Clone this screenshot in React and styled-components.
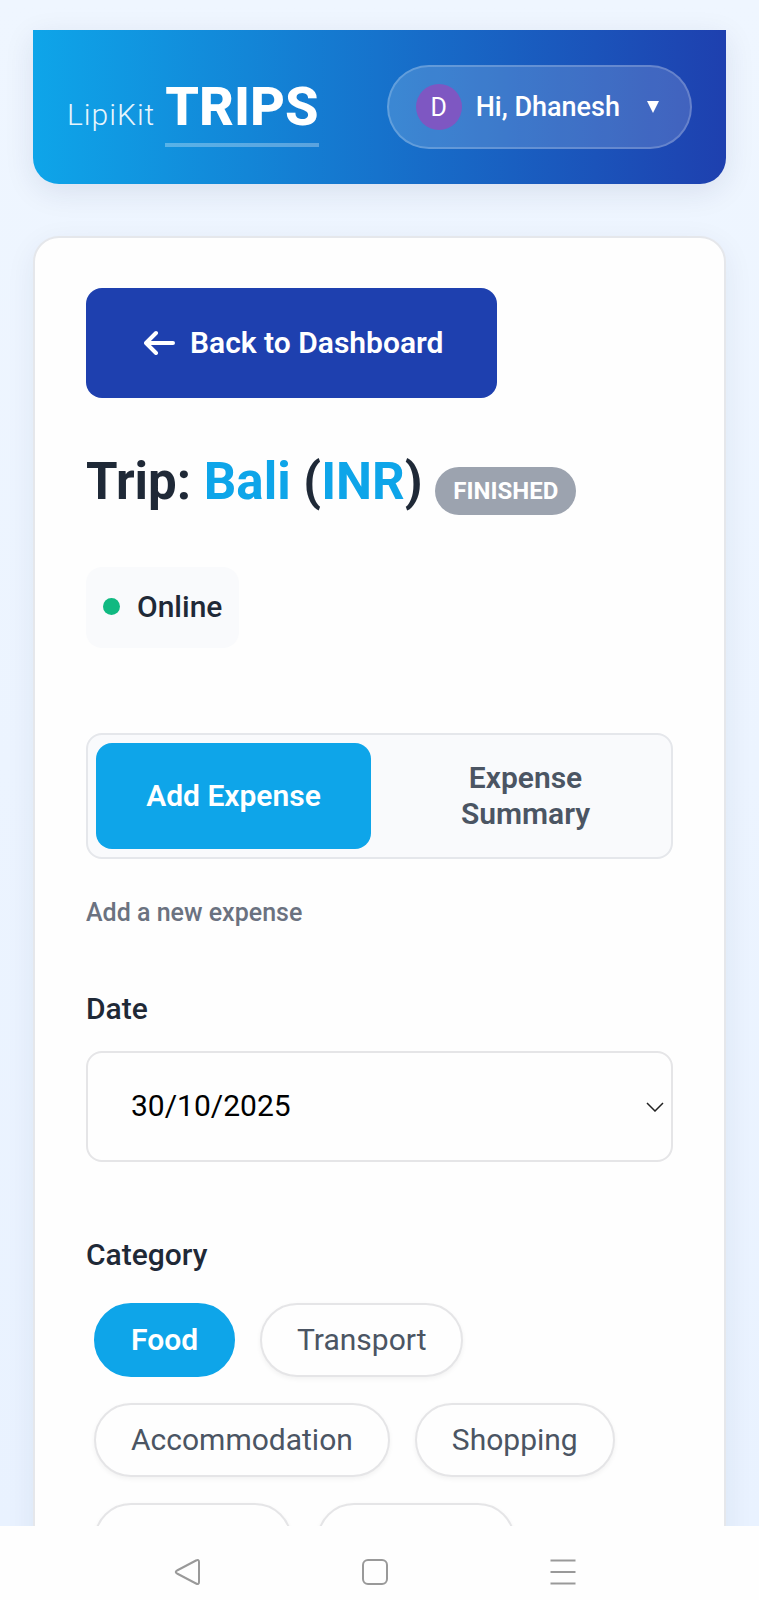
import React, { useState } from "react";
import styled, { createGlobalStyle, css } from "styled-components";

const GlobalStyle = createGlobalStyle`
  *, *::before, *::after { box-sizing: border-box; }
  body {
    margin: 0;
    font-family: Roboto, "Noto Sans", sans-serif;
    color: #1f2937;
    background: #fefefe;
  }
  button, select { font-family: inherit; }
`;

const Screen = styled.div`
  display: flex;
  flex-direction: column;
  height: 100vh;
`;

const Viewport = styled.div`
  flex: 1;
  min-height: 0;
  overflow: hidden;
  padding: 30px 33px 0;
  background: linear-gradient(180deg, #eff6ff 0%, #e9f2ff 100%);
`;

const Header = styled.header`
  display: flex;
  align-items: center;
  justify-content: space-between;
  padding: 35px 34px;
  border-radius: 0 0 26px 26px;
  background: linear-gradient(90deg, #0ea5e9, #1e40af);
  box-shadow: 0 8px 30px rgba(30, 41, 90, 0.1);
  color: #fff;
`;

const Brand = styled.div`
  display: flex;
  align-items: baseline;
  gap: 10px;
  padding-top: 8px;
`;

const BrandPrefix = styled.span`
  font-size: 30px;
  font-weight: 300;
  letter-spacing: 1px;
  opacity: 0.9;
`;

const BrandName = styled.span`
  padding-bottom: 4px;
  border-bottom: 4px solid rgba(255, 255, 255, 0.3);
  font-size: 54px;
  font-weight: 800;
  line-height: 64px;
`;

const UserMenu = styled.button`
  display: flex;
  align-items: center;
  height: 84px;
  padding: 0 31px 0 27px;
  border: 2px solid rgba(255, 255, 255, 0.2);
  border-radius: 42px;
  background: rgba(255, 255, 255, 0.16);
  color: #fff;
  font-size: 27px;
  font-weight: 500;
`;

const Avatar = styled.span`
  display: grid;
  place-items: center;
  width: 46px;
  height: 46px;
  margin-right: 14px;
  border-radius: 50%;
  background: #7e57c2;
  font-size: 25px;
  font-weight: 400;
`;

const Caret = styled.svg`
  width: 12px;
  height: 12px;
  margin-left: 27px;
  fill: currentColor;
`;

const Card = styled.main`
  margin-top: 52px;
  padding: 50px 51px 52px;
  border: 2px solid #e5e7eb;
  border-radius: 26px;
  background: #fefefe;
  box-shadow: 0 8px 30px rgba(30, 41, 90, 0.07);
`;

const BackButton = styled.button`
  display: inline-flex;
  align-items: center;
  gap: 14px;
  height: 110px;
  padding: 0 54px 2px 58px;
  border: 0;
  border-radius: 16px;
  background: #1e40af;
  color: #fff;
  font-size: 30px;
  font-weight: 600;
`;

const BackArrow = styled.svg`
  width: 32px;
  height: 26px;
`;

const Title = styled.h1`
  margin: 50px 0 0;
  font-size: 51px;
  font-weight: 700;
  line-height: 68px;
`;

const Accent = styled.span`
  color: #0ea5e9;
`;

const Badge = styled.span`
  display: inline-block;
  padding: 0 18px;
  border-radius: 24px;
  background: #9ca3af;
  color: #fff;
  font-size: 24px;
  font-weight: 700;
  line-height: 48px;
`;

const Status = styled.div`
  display: flex;
  align-items: center;
  gap: 17px;
  width: fit-content;
  height: 81px;
  margin-top: 51px;
  padding: 0 17px 2px;
  border-radius: 16px;
  background: #f9fafc;
  font-size: 30px;
  font-weight: 500;
`;

const StatusDot = styled.span`
  width: 17px;
  height: 17px;
  border-radius: 50%;
  background: #10b981;
`;

const Tabs = styled.div`
  display: grid;
  grid-template-columns: 1fr 1fr;
  gap: 17px;
  margin-top: 85px;
  padding: 8px;
  border: 2px solid #e5e7eb;
  border-radius: 16px;
  background: #f9fafc;
`;

const Tab = styled.button`
  min-height: 106px;
  padding: 0 48px;
  border: 0;
  border-radius: 16px;
  background: ${(p) => (p.$active ? "#0ea5e9" : "transparent")};
  color: ${(p) => (p.$active ? "#fff" : "#4b5563")};
  font-size: 30px;
  font-weight: 600;
  line-height: 36px;
`;

const Hint = styled.p`
  margin: 37px 0 0;
  color: #6b7280;
  font-size: 25px;
  font-weight: 500;
  line-height: 34px;
`;

const fieldLabel = css`
  display: block;
  padding: 0;
  font-size: 30px;
  font-weight: 500;
  line-height: 36px;
`;

const Field = styled.div`
  margin-top: 61px;
`;

const Label = styled.label`
  ${fieldLabel}
`;

const SelectWrap = styled.div`
  display: grid;
  align-items: center;
  margin-top: 24px;
`;

const Select = styled.select`
  grid-area: 1 / 1;
  width: 100%;
  height: 111px;
  padding: 0 43px 2px;
  border: 2px solid #e5e5e7;
  border-radius: 16px;
  background: #fefefe;
  color: #000;
  font-size: 30px;
  appearance: none;
`;

const Chevron = styled.svg`
  grid-area: 1 / 1;
  justify-self: end;
  width: 18px;
  height: 10px;
  margin-right: 9px;
  pointer-events: none;
`;

const Categories = styled.fieldset`
  margin: 75px 0 0;
  padding: 0;
  border: 0;
`;

const Legend = styled.legend`
  ${fieldLabel}
`;

const ChipList = styled.div`
  display: flex;
  flex-wrap: wrap;
  gap: 26px 25px;
  padding: 30px 8px 0;
`;

const Chip = styled.button`
  height: 74px;
  min-width: ${(p) => (p.$wide ? "198px" : "0")};
  padding: 0 35px 2px;
  border: 2px solid ${(p) => (p.$active ? "#0ea5e9" : "#e5e5e7")};
  border-radius: 37px;
  background: ${(p) => (p.$active ? "#0ea5e9" : "#fefefe")};
  box-shadow: ${(p) => (p.$active ? "none" : "0 2px 5px rgba(0, 0, 0, 0.05)")};
  color: ${(p) => (p.$active ? "#fff" : "#4b5563")};
  font-size: 30px;
  font-weight: ${(p) => (p.$active ? 600 : 400)};
`;

const SystemBar = styled.nav`
  display: grid;
  grid-template-columns: repeat(3, 25%);
  justify-content: center;
  align-items: center;
  height: 74px;
  padding: 0 9px 0 0;
  background: #fefefe;
`;

const SystemButton = styled.button`
  display: grid;
  place-items: center;
  height: 100%;
  margin: 0;
  padding: 18px 0 0;
  border: 0;
  background: transparent;
  color: #999;

  svg {
    width: 28px;
    height: 28px;
    fill: none;
    stroke: currentColor;
    stroke-width: 2;
    stroke-linejoin: round;
  }
`;

const categories = [
  { id: "food", label: "Food" },
  { id: "transport", label: "Transport" },
  { id: "accommodation", label: "Accommodation" },
  { id: "shopping", label: "Shopping" },
  { id: "custom-1" },
  { id: "custom-2" },
];

export default function App() {
  const [tab, setTab] = useState("add");
  const [category, setCategory] = useState("food");

  return (
    <>
      <GlobalStyle />
      <Screen>
        <Viewport>
          <Header>
            <Brand>
              <BrandPrefix>LipiKit</BrandPrefix>
              <BrandName>TRIPS</BrandName>
            </Brand>
            <UserMenu type="button" aria-haspopup="menu">
              <Avatar>D</Avatar>
              Hi, Dhanesh
              <Caret viewBox="0 0 12 12" aria-hidden="true">
                <path d="M0 0H12L6 12Z" />
              </Caret>
            </UserMenu>
          </Header>

          <Card>
            <BackButton type="button">
              <BackArrow viewBox="0 0 32 26" fill="none" stroke="currentColor" strokeWidth="4" strokeLinecap="round" strokeLinejoin="round" aria-hidden="true">
                <path d="M29 14H3M12 4L2 14L12 24" />
              </BackArrow>
              Back to Dashboard
            </BackButton>

            <Title>
              Trip: <Accent>Bali</Accent> (<Accent>INR</Accent>){" "}
              <Badge>FINISHED</Badge>
            </Title>

            <Status role="status">
              <StatusDot />
              Online
            </Status>

            <Tabs role="tablist">
              <Tab type="button" role="tab" aria-selected={tab === "add"} $active={tab === "add"} onClick={() => setTab("add")}>
                Add Expense
              </Tab>
              <Tab type="button" role="tab" aria-selected={tab === "summary"} $active={tab === "summary"} onClick={() => setTab("summary")}>
                Expense Summary
              </Tab>
            </Tabs>

            <Hint>Add a new expense</Hint>

            <Field>
              <Label htmlFor="expense-date">Date</Label>
              <SelectWrap>
                <Select id="expense-date" defaultValue="2025-10-30">
                  <option value="2025-10-30">30/10/2025</option>
                </Select>
                <Chevron viewBox="0 0 18 10" fill="none" stroke="#222" strokeWidth="1.500" aria-hidden="true">
                  <path d="M1 1L9 9L17 1" />
                </Chevron>
              </SelectWrap>
            </Field>

            <Categories>
              <Legend>Category</Legend>
              <ChipList>
                {categories.map(({ id, label }) => (
                  <Chip
                    key={id}
                    type="button"
                    aria-label={label ?? "Custom category"}
                    aria-pressed={category === id}
                    $active={category === id}
                    $wide={!label}
                    onClick={() => setCategory(id)}
                  >
                    {label}
                  </Chip>
                ))}
              </ChipList>
            </Categories>
          </Card>
        </Viewport>

        <SystemBar>
          <SystemButton type="button" aria-label="Back">
            <svg viewBox="0 0 28 28">
              <path d="M22 2.500Q25 1 25 4V24Q25 27 22 25.500L3 15.500Q0.500 14 3 12.500Z" />
            </svg>
          </SystemButton>
          <SystemButton type="button" aria-label="Home">
            <svg viewBox="0 0 28 28">
              <rect x="2" y="2" width="24" height="24" rx="5" />
            </svg>
          </SystemButton>
          <SystemButton type="button" aria-label="Recent apps">
            <svg viewBox="0 0 28 28">
              <path d="M1.500 2.500H26.500M1.500 14H26.500M1.500 25.500H26.500" />
            </svg>
          </SystemButton>
        </SystemBar>
      </Screen>
    </>
  );
}
